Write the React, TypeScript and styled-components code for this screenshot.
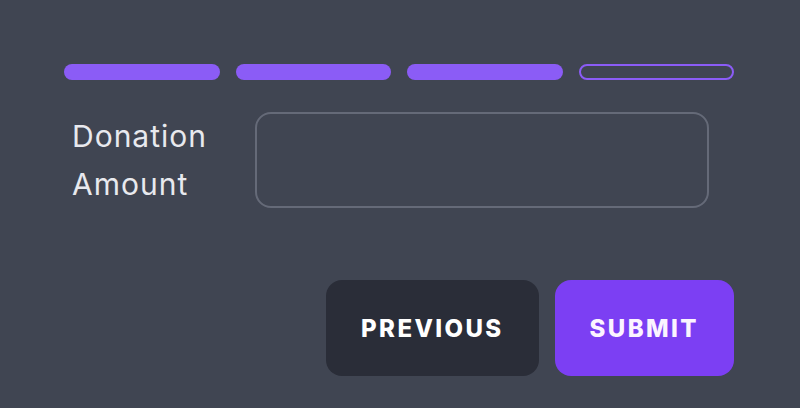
import React from "react";
import styled, { createGlobalStyle } from "styled-components";

const Global = createGlobalStyle`
  html, body { margin: 0; padding: 0; background: #404552; }
  body { font-family: "Inter", "Noto Sans", sans-serif; }
`;

const Page = styled.div`
  width: 800px;
  height: 408px;
  box-sizing: border-box;
  padding: 64px 66px 0 64px;
  background: #404552;
  display: flex;
  flex-direction: column;
  font-family: "Inter", "Noto Sans", sans-serif;
`;

const Steps = styled.div`
  display: grid;
  grid-template-columns: repeat(4, 1fr);
  gap: 16px;
`;

const Step = styled.div<{ $done: boolean }>`
  height: 16px;
  box-sizing: border-box;
  border-radius: 8px;
  background: ${(p) => (p.$done ? "#8b5cf6" : "transparent")};
  border: ${(p) => (p.$done ? "none" : "2px solid #8b5cf6")};
`;

const Field = styled.div`
  display: grid;
  grid-template-columns: 183px 1fr;
  align-items: start;
  margin-top: 32px;
  padding: 0 25px 0 8px;
`;

const Label = styled.label`
  font-size: 30px;
  line-height: 48px;
  letter-spacing: 1px;
  color: #e8e9ee;
  font-weight: 400;
`;

const Input = styled.input`
  height: 96px;
  box-sizing: border-box;
  border: 2px solid #656a78;
  border-radius: 16px;
  background: transparent;
  color: #e8e9ee;
  font-size: 24px;
  font-family: inherit;
  padding: 0 20px;
  outline: none;
`;

const Actions = styled.div`
  display: flex;
  justify-content: flex-end;
  gap: 16px;
  margin-top: 72px;
`;

const Button = styled.button<{ $primary?: boolean }>`
  height: 96px;
  padding: 0 35px;
  border: none;
  border-radius: 16px;
  font-family: inherit;
  font-size: 24px;
  font-weight: 800;
  letter-spacing: 2.4px;
  text-transform: uppercase;
  color: ${(p) => (p.$primary ? "#fbf4ff" : "#ffffff")};
  background: ${(p) => (p.$primary ? "#7c3ff3" : "#2a2d38")};
  cursor: pointer;
`;

export default function App() {
  const steps = [true, true, true, false];
  return (
    <>
      <Global />
      <Page>
        <Steps>
          {steps.map((d, i) => (
            <Step key={i} $done={d} />
          ))}
        </Steps>
        <Field>
          <Label htmlFor="amount">Donation Amount</Label>
          <Input id="amount" type="text" />
        </Field>
        <Actions>
          <Button>Previous</Button>
          <Button $primary>Submit</Button>
        </Actions>
      </Page>
    </>
  );
}
